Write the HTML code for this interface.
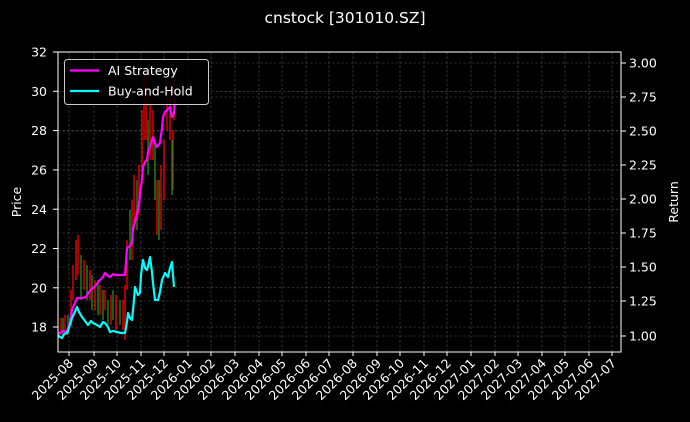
<!DOCTYPE html>
<html><head><style>
html,body{margin:0;padding:0;background:#000;}
svg{display:block;font-family:"DejaVu Sans","Liberation Sans",sans-serif;}
</style></head><body>
<svg width="690" height="422" viewBox="0 0 690 422" xmlns="http://www.w3.org/2000/svg">
<rect width="690" height="422" fill="#000"/>
<text x="345" y="23" fill="#fff" font-size="15.5" text-anchor="middle">cnstock [301010.SZ]</text>
<g stroke="#555" stroke-width="0.6" stroke-dasharray="2.5,2">
<line x1="58" x2="621" y1="52" y2="52"/><line x1="58" x2="621" y1="91.3" y2="91.3"/><line x1="58" x2="621" y1="130.6" y2="130.6"/><line x1="58" x2="621" y1="169.9" y2="169.9"/><line x1="58" x2="621" y1="209.2" y2="209.2"/><line x1="58" x2="621" y1="248.5" y2="248.5"/><line x1="58" x2="621" y1="287.8" y2="287.8"/><line x1="58" x2="621" y1="327" y2="327"/>
<line x1="58" x2="621" y1="63" y2="63"/><line x1="58" x2="621" y1="97" y2="97"/><line x1="58" x2="621" y1="131" y2="131"/><line x1="58" x2="621" y1="165" y2="165"/><line x1="58" x2="621" y1="199" y2="199"/><line x1="58" x2="621" y1="233" y2="233"/><line x1="58" x2="621" y1="267" y2="267"/><line x1="58" x2="621" y1="301" y2="301"/><line x1="58" x2="621" y1="336" y2="336"/>
<line x1="69" x2="69" y1="52" y2="352"/><line x1="94" x2="94" y1="52" y2="352"/><line x1="117" x2="117" y1="52" y2="352"/><line x1="141" x2="141" y1="52" y2="352"/><line x1="164" x2="164" y1="52" y2="352"/><line x1="188" x2="188" y1="52" y2="352"/><line x1="211" x2="211" y1="52" y2="352"/><line x1="235" x2="235" y1="52" y2="352"/><line x1="259" x2="259" y1="52" y2="352"/><line x1="282" x2="282" y1="52" y2="352"/><line x1="306" x2="306" y1="52" y2="352"/><line x1="329" x2="329" y1="52" y2="352"/><line x1="353" x2="353" y1="52" y2="352"/><line x1="377" x2="377" y1="52" y2="352"/><line x1="400" x2="400" y1="52" y2="352"/><line x1="424" x2="424" y1="52" y2="352"/><line x1="447" x2="447" y1="52" y2="352"/><line x1="471" x2="471" y1="52" y2="352"/><line x1="495" x2="495" y1="52" y2="352"/><line x1="518" x2="518" y1="52" y2="352"/><line x1="542" x2="542" y1="52" y2="352"/><line x1="565" x2="565" y1="52" y2="352"/><line x1="589" x2="589" y1="52" y2="352"/><line x1="612" x2="612" y1="52" y2="352"/>
</g>
<g stroke-width="1.4">
<g stroke="#e00">
<line x1="61" x2="61" y1="318" y2="335"/><line x1="65" x2="65" y1="315" y2="330"/><line x1="71" x2="71" y1="290" y2="325"/><line x1="73" x2="73" y1="265" y2="300"/><line x1="76" x2="76" y1="240" y2="280"/><line x1="78" x2="78" y1="235" y2="275"/><line x1="84" x2="84" y1="260" y2="290"/><line x1="90" x2="90" y1="270" y2="300"/><line x1="95" x2="95" y1="280" y2="310"/><line x1="100" x2="100" y1="285" y2="315"/><line x1="105" x2="105" y1="290" y2="310"/><line x1="111" x2="111" y1="295" y2="325"/><line x1="116" x2="116" y1="295" y2="330"/><line x1="123" x2="123" y1="300" y2="330"/><line x1="125" x2="125" y1="285" y2="340"/><line x1="127" x2="127" y1="240" y2="290"/><line x1="132" x2="132" y1="200" y2="260"/><line x1="134" x2="134" y1="175" y2="230"/><line x1="139" x2="139" y1="165" y2="215"/><line x1="142" x2="142" y1="110" y2="170"/><line x1="144" x2="144" y1="70" y2="140"/><line x1="146" x2="146" y1="80" y2="140"/><line x1="150" x2="150" y1="100" y2="160"/><line x1="153" x2="153" y1="110" y2="160"/><line x1="157" x2="157" y1="180" y2="235"/><line x1="161" x2="161" y1="165" y2="230"/><line x1="164" x2="164" y1="140" y2="200"/><line x1="167" x2="167" y1="80" y2="130"/><line x1="170" x2="170" y1="90" y2="140"/><line x1="173" x2="173" y1="130" y2="190"/><line x1="174" x2="174" y1="80" y2="120"/>
</g>
<g stroke="#1a8a1a">
<line x1="63" x2="63" y1="318" y2="332"/><line x1="68" x2="68" y1="315" y2="335"/><line x1="81" x2="81" y1="255" y2="300"/><line x1="87" x2="87" y1="265" y2="300"/><line x1="92" x2="92" y1="275" y2="310"/><line x1="98" x2="98" y1="280" y2="315"/><line x1="103" x2="103" y1="290" y2="320"/><line x1="108" x2="108" y1="300" y2="325"/><line x1="113" x2="113" y1="290" y2="320"/><line x1="120" x2="120" y1="300" y2="325"/><line x1="130" x2="130" y1="210" y2="260"/><line x1="137" x2="137" y1="180" y2="230"/><line x1="148" x2="148" y1="120" y2="175"/><line x1="155" x2="155" y1="140" y2="200"/><line x1="159" x2="159" y1="180" y2="240"/><line x1="172" x2="172" y1="140" y2="195"/>
</g>
</g>
<polyline fill="none" stroke="#ff00ff" stroke-width="2.2" stroke-linejoin="round" points="58,333 61,333 63,331 67,332 70,322 72,310 74,305 77,298 82,298 86,297 89,292 93,288 96,285 100,280 103,277 105,273 108,276 110,277 113,274 115,275 120,275 125,275 127,248 130,246 132,243 133,228 135,222 137,213 139,205 140,193 142,180 143,167 145,162 147,160 148,152 150,147 152,140 153,137 155,143 157,147 160,143 162,128 163,117 165,112 167,110 170,107 172,117 174,113 175,100"/>
<polyline fill="none" stroke="#00ffff" stroke-width="2.2" stroke-linejoin="round" points="58,335 60,337 62,338 64,334 67,333 70,325 72,318 74,314 77,307 79,312 82,317 85,321 88,325 91,321 93,323 97,325 100,327 103,322 105,323 108,327 110,332 113,331 117,332 121,333 125,333 127,322 128,313 130,318 132,320 134,300 135,287 138,295 140,293 141,275 143,260 145,268 147,270 149,262 150,257 152,272 153,283 155,300 158,300 160,292 162,280 165,273 168,277 170,268 172,262 173,275 174,287"/>
<rect x="58" y="52" width="563" height="300" fill="none" stroke="#fff" stroke-width="1"/>
<g stroke="#fff" stroke-width="1">
<line x1="53" x2="58" y1="52" y2="52"/><line x1="53" x2="58" y1="91.3" y2="91.3"/><line x1="53" x2="58" y1="130.6" y2="130.6"/><line x1="53" x2="58" y1="169.9" y2="169.9"/><line x1="53" x2="58" y1="209.2" y2="209.2"/><line x1="53" x2="58" y1="248.5" y2="248.5"/><line x1="53" x2="58" y1="287.8" y2="287.8"/><line x1="53" x2="58" y1="327" y2="327"/>
<line x1="621" x2="626" y1="63" y2="63"/><line x1="621" x2="626" y1="97" y2="97"/><line x1="621" x2="626" y1="131" y2="131"/><line x1="621" x2="626" y1="165" y2="165"/><line x1="621" x2="626" y1="199" y2="199"/><line x1="621" x2="626" y1="233" y2="233"/><line x1="621" x2="626" y1="267" y2="267"/><line x1="621" x2="626" y1="301" y2="301"/><line x1="621" x2="626" y1="336" y2="336"/>
</g>
<g fill="#fff" font-size="12.5" text-anchor="end">
<text x="47" y="56.5">32</text><text x="47" y="96">30</text><text x="47" y="135">28</text><text x="47" y="174.5">26</text><text x="47" y="214">24</text><text x="47" y="253">22</text><text x="47" y="292.5">20</text><text x="47" y="331.5">18</text>
</g>
<g fill="#fff" font-size="12.5">
<text x="629" y="67.5">3.00</text><text x="629" y="101.5">2.75</text><text x="629" y="135.5">2.50</text><text x="629" y="169.5">2.25</text><text x="629" y="203.5">2.00</text><text x="629" y="237.5">1.75</text><text x="629" y="271.5">1.50</text><text x="629" y="305.5">1.25</text><text x="629" y="340.5">1.00</text>
</g>
<text transform="translate(21,202) rotate(-90)" fill="#fff" font-size="12.5" text-anchor="middle">Price</text>
<text transform="translate(678,202) rotate(-90)" fill="#fff" font-size="12.5" text-anchor="middle">Return</text>
<g stroke="#fff" stroke-width="1">
<line x1="69" x2="69" y1="352" y2="356"/><line x1="94" x2="94" y1="352" y2="356"/><line x1="117" x2="117" y1="352" y2="356"/><line x1="141" x2="141" y1="352" y2="356"/><line x1="164" x2="164" y1="352" y2="356"/><line x1="188" x2="188" y1="352" y2="356"/><line x1="211" x2="211" y1="352" y2="356"/><line x1="235" x2="235" y1="352" y2="356"/><line x1="259" x2="259" y1="352" y2="356"/><line x1="282" x2="282" y1="352" y2="356"/><line x1="306" x2="306" y1="352" y2="356"/><line x1="329" x2="329" y1="352" y2="356"/><line x1="353" x2="353" y1="352" y2="356"/><line x1="377" x2="377" y1="352" y2="356"/><line x1="400" x2="400" y1="352" y2="356"/><line x1="424" x2="424" y1="352" y2="356"/><line x1="447" x2="447" y1="352" y2="356"/><line x1="471" x2="471" y1="352" y2="356"/><line x1="495" x2="495" y1="352" y2="356"/><line x1="518" x2="518" y1="352" y2="356"/><line x1="542" x2="542" y1="352" y2="356"/><line x1="565" x2="565" y1="352" y2="356"/><line x1="589" x2="589" y1="352" y2="356"/><line x1="612" x2="612" y1="352" y2="356"/>
</g>
<g fill="#fff" font-size="12.5" text-anchor="end">
<text transform="translate(74,364) rotate(-45)">2025-08</text><text transform="translate(99,364) rotate(-45)">2025-09</text><text transform="translate(122,364) rotate(-45)">2025-10</text><text transform="translate(146,364) rotate(-45)">2025-11</text><text transform="translate(169,364) rotate(-45)">2025-12</text><text transform="translate(193,364) rotate(-45)">2026-01</text><text transform="translate(216,364) rotate(-45)">2026-02</text><text transform="translate(240,364) rotate(-45)">2026-03</text><text transform="translate(264,364) rotate(-45)">2026-04</text><text transform="translate(287,364) rotate(-45)">2026-05</text><text transform="translate(311,364) rotate(-45)">2026-06</text><text transform="translate(334,364) rotate(-45)">2026-07</text><text transform="translate(358,364) rotate(-45)">2026-08</text><text transform="translate(382,364) rotate(-45)">2026-09</text><text transform="translate(405,364) rotate(-45)">2026-10</text><text transform="translate(429,364) rotate(-45)">2026-11</text><text transform="translate(452,364) rotate(-45)">2026-12</text><text transform="translate(476,364) rotate(-45)">2027-01</text><text transform="translate(500,364) rotate(-45)">2027-02</text><text transform="translate(523,364) rotate(-45)">2027-03</text><text transform="translate(547,364) rotate(-45)">2027-04</text><text transform="translate(570,364) rotate(-45)">2027-05</text><text transform="translate(594,364) rotate(-45)">2027-06</text><text transform="translate(617,364) rotate(-45)">2027-07</text>
</g>
<rect x="64.5" y="59.5" width="144" height="45" rx="3" fill="#000" fill-opacity="0.85" stroke="#ccc" stroke-width="1"/>
<line x1="70" x2="99" y1="70.5" y2="70.5" stroke="#ff00ff" stroke-width="2.2"/>
<line x1="70" x2="99" y1="91" y2="91" stroke="#00ffff" stroke-width="2.2"/>
<g fill="#fff" font-size="12.5"><text x="108" y="75">AI Strategy</text><text x="108" y="95.5">Buy-and-Hold</text></g>
</svg>
</body></html>
